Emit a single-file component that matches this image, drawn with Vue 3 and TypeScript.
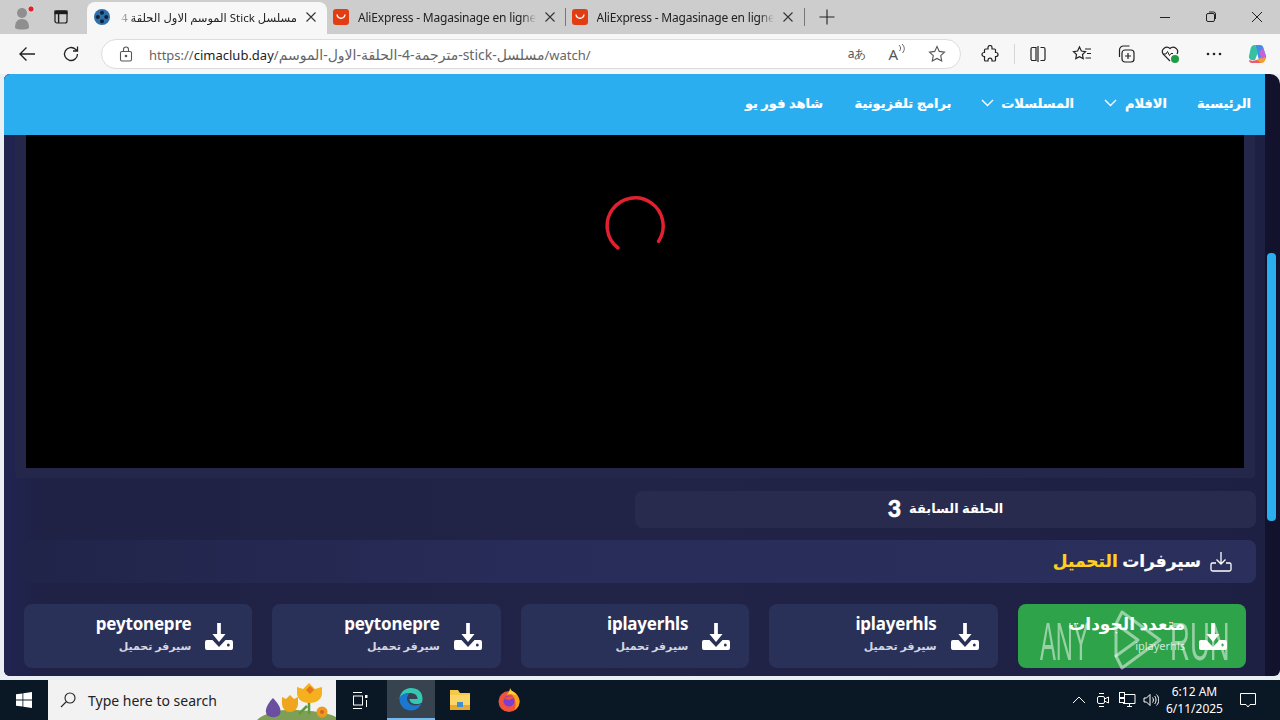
<script setup lang="ts">
const navItems = [
  { label: 'الرئيسية', caret: false, width: 54 },
  { label: 'الافلام', caret: true, width: 63 },
  { label: 'المسلسلات', caret: true, width: 93 },
  { label: 'برامج تلفزيونية', caret: false, width: 96 },
  { label: 'شاهد فور يو', caret: false, width: 82 },
]

const servers = [
  { name: 'متعدد الجودات', sub: 'iplayerhls', green: true },
  { name: 'iplayerhls', sub: 'سيرفر تحميل', green: false },
  { name: 'iplayerhls', sub: 'سيرفر تحميل', green: false },
  { name: 'peytonepre', sub: 'سيرفر تحميل', green: false },
  { name: 'peytonepre', sub: 'سيرفر تحميل', green: false },
]

const shopTabs = ['AliExpress - Magasinage en ligne', 'AliExpress - Magasinage en ligne']
</script>

<template>
  <div class="screen">
    <!-- tab strip -->
    <header class="tabstrip">
      <div class="profile">
        <svg width="24" height="26" viewBox="0 0 24 26">
          <circle cx="10" cy="9" r="5" fill="#8f8f8f" />
          <path d="M3 24c0-6 2.500-9 7-9s7 3 7 9c-3 2-11 2-14 0z" fill="#8f8f8f" />
          <circle cx="19" cy="5" r="3.200" fill="#d9232e" stroke="#e8e8e8" stroke-width="1" />
        </svg>
      </div>
      <div class="workspace">
        <svg width="14" height="14" viewBox="0 0 14 14" fill="none" stroke="#1c1c1c" stroke-width="1.200">
          <rect x="1" y="1" width="12" height="12" rx="2" />
          <path d="M4.600 3.600V13" stroke-width="1.400" />
          <rect x="1" y="1" width="12" height="2.600" fill="#1c1c1c" />
        </svg>
      </div>
      <div class="tab tab-active">
        <svg class="favicon" width="16" height="16" viewBox="0 0 16 16">
          <circle cx="8" cy="8" r="8" fill="#2f6fa8" />
          <circle cx="8" cy="3.800" r="2" fill="#10233c" />
          <circle cx="8" cy="12.200" r="2" fill="#10233c" />
          <circle cx="3.800" cy="8" r="2" fill="#10233c" />
          <circle cx="12.200" cy="8" r="2" fill="#10233c" />
        </svg>
        <span class="tab-title rtl-title">مسلسل Stick الموسم الاول الحلقة 4</span>
        <svg class="tab-x" width="10" height="10" viewBox="0 0 10 10" stroke="#333" stroke-width="1.100"><path d="M.5.5l9 9M9.500.5l-9 9" /></svg>
      </div>
      <div v-for="(title, i) in shopTabs" :key="i" class="tab" :class="{ 'tab-sep': i === 0 }">
        <svg class="favicon" width="16" height="16" viewBox="0 0 16 16">
          <rect width="16" height="16" rx="3" fill="#e13c12" />
          <path d="M4 5.500c.6 5 7.400 5 8 0" fill="none" stroke="#fff" stroke-width="1.400" />
        </svg>
        <span class="tab-title">{{ title }}</span>
        <svg class="tab-x" width="10" height="10" viewBox="0 0 10 10" stroke="#333" stroke-width="1.100"><path d="M.5.5l9 9M9.500.5l-9 9" /></svg>
      </div>
      <div class="new-tab">
        <svg width="16" height="16" viewBox="0 0 16 16" stroke="#222" stroke-width="1.100"><path d="M8 .5v15M.5 8h15" /></svg>
      </div>
      <div class="win-controls">
        <svg width="46" height="14" viewBox="0 0 46 14" stroke="#222"><path d="M18 7.500h10" /></svg>
        <svg width="46" height="14" viewBox="0 0 46 14" fill="none" stroke="#222"><rect x="18.500" y="3.500" width="8" height="8" rx="1.500" /><path d="M21 2h4.500a2 2 0 0 1 2 2v5" /></svg>
        <svg width="46" height="14" viewBox="0 0 46 14" stroke="#222"><path d="M18 2l10 10M28 2L18 12" /></svg>
      </div>
    </header>

    <!-- address bar -->
    <div class="toolbar">
      <button class="tool back">
        <svg width="18" height="16" viewBox="0 0 18 16" fill="none" stroke="#222" stroke-width="1.400"><path d="M17 8H2M8.500 1.500L2 8l6.500 6.500" /></svg>
      </button>
      <button class="tool reload">
        <svg width="18" height="18" viewBox="0 0 18 18" fill="none" stroke="#222" stroke-width="1.300"><path d="M15.500 9a6.500 6.500 0 1 1-2-4.700L15.500 6M15.500 1.500V6H11" /></svg>
      </button>
      <div class="omnibox">
        <svg class="lock" width="14" height="16" viewBox="0 0 14 16" fill="none" stroke="#555" stroke-width="1.100"><rect x="1.500" y="5.500" width="11" height="9.500" rx="1.500" /><path d="M4.500 5.500V3.500a2.500 2.500 0 0 1 5 0v2" /><circle cx="7" cy="10" r=".8" fill="#555" /></svg>
        <span class="url"><span class="url-dim">https://</span><span class="url-host">cimaclub.day</span><span class="url-dim">/<bdi dir="rtl" class="url-ar">مسلسل-stick-مترجمة-4-الحلقة-الاول-الموسم</bdi>/watch/</span></span>
        <div class="omni-icons">
          <span class="translate">aあ</span>
          <span class="read">A<svg width="7" height="10" viewBox="0 0 7 10" fill="none" stroke="#555" stroke-width=".9"><path d="M1 1c2 2 2 4 .5 6M4 0c3 3 3 6 .5 9" /></svg></span>
          <svg width="18" height="18" viewBox="0 0 18 18" fill="none" stroke="#555" stroke-width="1.100"><path d="M9 1.500l2.300 4.900 5.200.7-3.800 3.600 1 5.300L9 13.400 4.300 16l1-5.300L1.500 7.100l5.200-.7z" /></svg>
        </div>
      </div>
      <div class="tool-icons">
        <span class="cell"><svg width="18" height="18" viewBox="0 0 18 18" fill="none" stroke="#222" stroke-width="1.200"><path d="M7 2.500a2 2 0 0 1 4 0V4h2.500a1 1 0 0 1 1 1v2.500H15a2 2 0 0 1 0 4h-.5V15a1 1 0 0 1-1 1H11v-.8a2 2 0 0 0-4 0v.8H4.500a1 1 0 0 1-1-1v-3.500H3a2 2 0 0 1 0-4h.5V5a1 1 0 0 1 1-1H7z" /></svg></span>
        <i class="tool-sep"></i>
        <span class="cell"><svg width="18" height="18" viewBox="0 0 18 18" fill="none" stroke="#222" stroke-width="1.200"><path d="M7 2.500H3.500A1.500 1.500 0 0 0 2 4v10a1.500 1.500 0 0 0 1.500 1.500H7zM9 1v16M11.500 2.500h3A1.500 1.500 0 0 1 16 4v10a1.500 1.500 0 0 1-1.500 1.500h-3" /></svg></span>
        <span class="cell"><svg width="20" height="18" viewBox="0 0 20 18" fill="none" stroke="#222" stroke-width="1.200"><path d="M7.500 2l1.900 4 4.100.6-3 2.900.7 4.100-3.700-2-3.700 2 .7-4.100-3-2.900L5.600 6zM13 4h6M15 8.500h4M13.500 13H19" /></svg></span>
        <span class="cell"><svg width="20" height="20" viewBox="0 0 20 20" fill="none" stroke="#222" stroke-width="1.200"><rect x="6" y="6" width="12" height="12" rx="3" /><path d="M12 9v6M9 12h6M3.500 13V6a4 4 0 0 1 4-4h6" /></svg></span>
        <span class="cell"><svg width="20" height="20" viewBox="0 0 20 20" fill="none"><path d="M10 17L3 10a4.500 4.500 0 0 1 7-5.500A4.500 4.500 0 0 1 17 10" stroke="#222" stroke-width="1.200" /><path d="M3 10h3l1.500-2.500 2 4 1.500-2h2" stroke="#222" stroke-width="1" /><circle cx="15" cy="15" r="4" fill="#1f9d45" /></svg></span>
        <span class="cell"><svg width="18" height="18" viewBox="0 0 18 18" fill="#222"><circle cx="3" cy="9" r="1.300" /><circle cx="9" cy="9" r="1.300" /><circle cx="15" cy="9" r="1.300" /></svg></span>
        <span class="cell"><svg width="22" height="22" viewBox="0 0 22 22">
          <path d="M8 2h5c2 0 3 1 3.500 3L19 13c.6 2-1 4-3 4h-4L9 6C8.700 4 8.500 3 8 2z" fill="#3f8ee8" />
          <path d="M8 2C5 2 4 4 3.500 6L2 13c-.5 2 1 4 3 4h3l3-8z" fill="#35c1a0" />
          <path d="M5 20h9c3 0 4-2 5-5l-3-2-4 3-3 1z" fill="#f3a02e" />
          <path d="M16 5l3 8-4 3-3-7z" fill="#c764d8" />
          <path d="M5 20c-2 0-3-1-3-3 2 1 5 1 8 0l4 3z" fill="#ea5b70" />
        </svg></span>
      </div>
    </div>

    <!-- web page -->
    <div class="viewport">
      <main class="page">
        <nav class="site-nav">
          <a v-for="item in navItems" :key="item.label" class="nav-link" :class="{ caret: item.caret }" :style="{ width: item.width + 'px' }">
            <span>{{ item.label }}</span>
            <svg v-if="item.caret" width="13" height="8" viewBox="0 0 13 8" fill="none" stroke="#fff" stroke-width="1.400"><path d="M1 1l5.500 5.500L12 1" /></svg>
          </a>
        </nav>

        <div class="content">
          <section class="player-wrap">
            <div class="player">
              <svg class="spinner" width="60" height="60" viewBox="0 0 60 60" fill="none" stroke="#e3202f" stroke-width="3.500" stroke-linecap="round"><path d="M13 52A28 28 0 1 1 53.600 45.200" /></svg>
            </div>
          </section>

          <div class="episode-row">
            <a class="prev-episode"><span class="ep-label">الحلقة السابقة</span><b class="ep-num">3</b></a>
          </div>

          <div class="section-head">
            <svg width="24" height="24" viewBox="0 0 24 24" fill="none" stroke="#fff" stroke-width="1.300"><path d="M12 2v12M7.500 9.500L12 14l4.500-4.500M7 13H3.500A1.500 1.500 0 0 0 2 14.500v5A1.500 1.500 0 0 0 3.500 21h17a1.500 1.500 0 0 0 1.500-1.500v-5a1.500 1.500 0 0 0-1.500-1.500H17" /></svg>
            <h2>سيرفرات <em>التحميل</em></h2>
          </div>

          <div class="servers">
            <a v-for="(srv, i) in servers" :key="i" class="server" :class="{ green: srv.green }">
              <svg class="dl" width="28" height="28" viewBox="0 0 30 28" preserveAspectRatio="none" fill="#fff">
                <path d="M13 1h4v11h5l-7 8-7-8h5z" />
                <path d="M2 18h6l7 7 7-7h6a2 2 0 0 1 2 2v6a2 2 0 0 1-2 2H2a2 2 0 0 1-2-2v-6a2 2 0 0 1 2-2z" />
                <circle cx="25" cy="23" r="1.500" fill="#2a3158" />
              </svg>
              <div class="srv-text">
                <strong>{{ srv.name }}</strong>
                <small>{{ srv.sub }}</small>
              </div>
            </a>
          </div>
        </div>
      </main>
      <div class="scrollbar"><i class="thumb"></i></div>
    </div>

    <!-- taskbar -->
    <footer class="taskbar">
      <div class="start">
        <svg width="16" height="16" viewBox="0 0 16 16" fill="#fff"><path d="M0 2.300l6.500-.9v6.200H0zM7.300 1.300L16 0v7.600H7.300zM0 8.400h6.500v6.200L0 13.700zM7.300 8.400H16V16l-8.700-1.300z" /></svg>
      </div>
      <div class="search">
        <svg width="16" height="16" viewBox="0 0 16 16" fill="none" stroke="#222" stroke-width="1.100"><circle cx="10" cy="6" r="5" /><path d="M6.500 9.500L1 15" /></svg>
        <span>Type here to search</span>
        <svg class="flowers" width="80" height="40" viewBox="0 0 80 40">
          <path d="M1 40c8-8 26-11 40-10s30 2 39 7v3z" fill="#7f9f56" />
          <path d="M17 18c-6 6-9 13-6 17 3 3 11 3 13-1 2-5-2-11-7-16z" fill="#6a4fa0" />
          <path d="M34 32V22M53 34V18M43 34l8-8" stroke="#5d9c3a" stroke-width="2.500" fill="none" />
          <path d="M26 17l4 2 4-4 4 4 4-2v7a8 8 0 0 1-16 0z" fill="#f0a51e" />
          <path d="M41 7l6 2 6-6 6 6 7-2v6c0 6-5 10-12.500 10S41 19 41 13z" fill="#f5b01d" />
          <path d="M50 10l4-4 4 4-4 4z" fill="#e8731a" />
          <circle cx="66" cy="32" r="5.500" fill="#ee9a22" />
          <circle cx="66" cy="32" r="2" fill="#d4661a" />
        </svg>
      </div>
      <div class="task-view">
        <svg width="16" height="17" viewBox="0 0 16 17" fill="none" stroke="#fff"><path d="M1 .5h9M1 16.500h9" /><rect x="1.500" y="4" width="9" height="9" /><rect x="13" y="3" width="2.500" height="3" fill="#fff" stroke="none" /><path d="M14.500 8v7" /></svg>
      </div>
      <div class="task-app active">
        <svg width="24" height="24" viewBox="0 0 24 24">
          <path d="M12 1C5 1 1 6 .5 12c2-4 6-6 10-6 5 0 8 2 8 6h-8c0 3 3 5 7 5 2 0 4-.5 5-1 .800-1.500 1-3 1-4.500C23.500 5 18.500 1 12 1z" fill="#36c7b3" />
          <path d="M.5 12C.5 19 6 23.500 12 23.500c4 0 8-2 10-6.500-7 3-13 1-14-5 0-2.500 1-4.500 2.500-6C5 6 .5 8.500.5 12z" fill="#1a78d0" />
        </svg>
      </div>
      <div class="task-app">
        <svg width="24" height="22" viewBox="0 0 24 22"><path d="M2 1h8l2 3h10v4H2z" fill="#f5c84a" /><rect x="2" y="6" width="20" height="15" fill="#fbd566" /><rect x="2" y="16" width="20" height="5" fill="#e8a92f" /><rect x="9" y="13" width="6" height="5" fill="#3f8fd6" /></svg>
      </div>
      <div class="task-app">
        <svg width="24" height="24" viewBox="0 0 24 24">
          <circle cx="12" cy="13.500" r="10.500" fill="#f0533a" />
          <path d="M12 3c4-1 9 3 10.500 9 .5 5-2 8-5 10 3-6 0-14-5.500-19z" fill="#f7a11d" />
          <path d="M13 0c1 3 4 4 6 7-3-1-7-1-9 0 1-2 3-4 3-7z" fill="#fcd133" />
          <circle cx="12" cy="13" r="5.500" fill="#7d3dd1" />
          <path d="M7 11c2-3 8-4 11-1-3 0-4 1-5 2z" fill="#f0533a" />
        </svg>
      </div>
      <div class="tray">
        <span class="tray-cell"><svg width="14" height="8" viewBox="0 0 14 8" fill="none" stroke="#fff"><path d="M1 7l6-6 6 6" /></svg></span>
        <span class="tray-cell"><svg width="14" height="18" viewBox="0 0 14 18" fill="none" stroke="#fff"><rect x="1.500" y="5.500" width="7" height="7" rx="1.500" /><path d="M8.500 8l4-2v6l-4-2M3 2.500h5M3 15.500h5" /></svg></span>
        <span class="tray-cell"><svg width="17" height="16" viewBox="0 0 17 16" fill="none" stroke="#fff"><path d="M4 2.500h12v9H4M8 14.500h5M10.500 11.500v3" /><rect x=".5" y=".5" width="5" height="5" fill="#0a1725" /><rect x=".5" y="6.500" width="5" height="4" /></svg></span>
        <span class="tray-cell"><svg width="16" height="14" viewBox="0 0 16 14" fill="none" stroke="#fff"><path d="M1 5h2.500L7 1.500v11L3.500 9H1zM9.500 4.500c1.200 1.500 1.200 3.500 0 5M11.500 3c2 2 2 6 0 8M13.500 1.500c3 3 3 8 0 11" /></svg></span>
      </div>
      <div class="clock"><span>6:12 AM</span><span>6/11/2025</span></div>
      <div class="notify">
        <svg width="16" height="15" viewBox="0 0 16 15" fill="none" stroke="#fff"><path d="M.5.500h15v11h-5.500l-2 2.500-2-2.500H.5z" /></svg>
      </div>
    </footer>

    <!-- sandbox watermark over the page -->
    <div class="watermark" aria-hidden="true">
      <span class="wm-any">ANY</span>
      <svg class="wm-play" width="50" height="62" viewBox="0 0 50 62" fill="none" stroke="currentColor" stroke-width="3" stroke-linejoin="round" stroke-linecap="round">
        <path d="M9 3L47 31 9 59 3 47 25 31 3 15z" />
        <path d="M3 16v31" />
      </svg>
      <span class="wm-run">RUN</span>
    </div>
  </div>
</template>

<style>
html, body { margin: 0; background: #e9eff2; overflow: hidden; }
</style>

<style scoped>
.screen {
  position: relative;
  width: 1280px;
  height: 720px;
  display: flex;
  flex-direction: column;
  overflow: hidden;
  font-family: "Noto Sans", "DejaVu Sans", sans-serif;
  background: #e9eff2;
}

.tabstrip {
  height: 34px;
  display: flex;
  align-items: flex-end;
  background: #cdcdcd;
  flex: none;
}
.profile { width: 44px; height: 34px; box-sizing: border-box; padding-left: 4px; display: flex; align-items: center; justify-content: center; }
.workspace { width: 33px; height: 34px; display: flex; align-items: center; justify-content: center; margin-right: 10px; }
.tab {
  width: 238.500px;
  height: 32px;
  display: flex;
  align-items: center;
  gap: 9px;
  padding: 0 11px 2px 6px;
  box-sizing: border-box;
  font-size: 12px;
  letter-spacing: -0.15px;
  color: #222;
  position: relative;
}
.tab-sep::after {
  content: "";
  position: absolute;
  right: 0;
  top: 6px;
  height: 18px;
  width: 1px;
  background: #777;
}
.tab-x { flex: none; }
.tab-active {
  width: 240px;
  background: #f7f7f7;
  border-radius: 8px 8px 0 0;
  padding-left: 7px;
  font-size: 11.500px;
  letter-spacing: 0;
}
.favicon { flex: none; }
.tab-title {
  flex: 1;
  min-width: 0;
  white-space: nowrap;
  overflow: hidden;
  -webkit-mask-image: linear-gradient(to left, #000 92%, transparent);
  mask-image: linear-gradient(to left, #000 92%, transparent);
}
.tab:not(.tab-active) .tab-title {
  letter-spacing: -0.2px;
  -webkit-mask-image: linear-gradient(to right, #000 92%, transparent);
  mask-image: linear-gradient(to right, #000 92%, transparent);
}
.rtl-title { direction: rtl; text-align: right; }
.new-tab { width: 44px; height: 18px; margin-bottom: 8px; display: flex; align-items: center; justify-content: center; border-left: 1px solid #777; box-sizing: border-box; }
.win-controls { margin-left: auto; height: 34px; display: flex; align-items: center; }

.toolbar {
  height: 40px;
  flex: none;
  display: flex;
  align-items: center;
  background: #f7f7f7;
}
.tool {
  width: 45px;
  height: 34px;
  border: 0;
  background: none;
  padding: 0;
  display: flex;
  align-items: center;
  justify-content: center;
}
.back { margin-left: 5px; }
.reload { margin-right: 7px; margin-left: -1px; }
.omnibox {
  width: 861px;
  height: 30px;
  box-sizing: border-box;
  display: flex;
  align-items: center;
  background: #fff;
  border: 1px solid #dcdcdc;
  border-radius: 15px;
  padding: 0 14px 0 17px;
}
.lock { flex: none; margin-right: 16px; }
.url { font-size: 13px; white-space: nowrap; }
.url-dim { color: #666; }
.url-host { color: #222; }
.url-ar { font-size: 14px; }
.omni-icons { margin-left: auto; display: flex; align-items: center; gap: 23px; color: #555; }
.translate { font-size: 12px; }
.read { font-size: 15px; display: flex; align-items: flex-start; margin-left: -1px; }
.tool-icons { flex: 1; display: flex; align-items: center; padding-left: 7px; }
.cell { width: 44px; height: 34px; flex: none; display: flex; align-items: center; justify-content: center; }
.tool-sep { width: 1px; height: 20px; margin: 0 1px 0 2px; background: #d5d5d5; }

.viewport {
  height: 602px;
  flex: none;
  display: flex;
  margin-left: 4px;
  background: #12122c;
  border-radius: 6px 10px 6px 6px;
  overflow: hidden;
}
.page {
  width: 1261px;
  display: flex;
  flex-direction: column;
  color: #fff;
  direction: rtl;
  background: linear-gradient(90deg, #202450, #1f2145 3%, #212347 50%, #1d2043);
}
.site-nav {
  height: 61px;
  flex: none;
  display: flex;
  align-items: center;
  gap: 30px;
  padding: 0 14px 4px 0;
  box-sizing: border-box;
  background: #2aaeef;
}
.nav-link {
  display: flex;
  align-items: center;
  justify-content: center;
  font-size: 13px;
  font-weight: 700;
  white-space: nowrap;
  -webkit-text-stroke: 0.2px #fff;
}
.nav-link.caret { justify-content: space-between; }
.content { flex: 1; display: flex; flex-direction: column; min-height: 0; }
.player-wrap {
  margin: 0 10px 0 11px;
  padding: 0 11px 10px;
  background: #25274a;
  border-radius: 0 0 4px 4px;
}
.player {
  height: 333px;
  background: #000;
  display: flex;
  justify-content: center;
  align-items: flex-start;
  padding-top: 61px;
  box-sizing: border-box;
}
.episode-row { display: flex; padding: 13px 9px 0; }
.prev-episode {
  width: 621px;
  height: 37px;
  display: flex;
  align-items: center;
  justify-content: center;
  gap: 8px;
  padding-bottom: 3px;
  box-sizing: border-box;
  background: #292b4e;
  border-radius: 8px;
  font-size: 13px;
  font-weight: 700;
}
.ep-num { font-size: 23px; line-height: 28px; font-family: "Lato", sans-serif; font-weight: 900; -webkit-text-stroke: 0.6px #fff; }
.section-head {
  height: 43px;
  margin: 12px 9px 0 0;
  width: 1232px;
  padding-right: 23px;
  box-sizing: border-box;
  display: flex;
  align-items: center;
  gap: 8px;
  background: linear-gradient(to left, #2a2f5c, #282c58 60%, #212449);
  border-radius: 8px;
}
.section-head h2 { margin: 0 0 3px; font-size: 17px; font-weight: 700; -webkit-text-stroke: 0.2px currentColor; }
.section-head em { font-style: normal; color: #ffd21f; }
.servers {
  display: flex;
  gap: 20px;
  padding: 21px 19px 0 0;
}
.server {
  width: 228.400px;
  height: 64px;
  flex: none;
  box-sizing: border-box;
  display: flex;
  align-items: center;
  gap: 14px;
  padding-right: 19px;
  background: #2a3158;
  border-radius: 8px;
}
.server.green { background: #2ea34a; }
.server.green .dl circle { fill: #2ea34a; }
.dl { flex: none; }
.srv-text { display: flex; flex-direction: column; margin-bottom: 5px; }
.srv-text strong { font-size: 17px; line-height: 24px; font-weight: 700; letter-spacing: -0.2px; }
.srv-text small { font-size: 11px; line-height: 19px; font-weight: 700; color: #d4d6e2; }
.green small { font-weight: 400; color: #cfe8d4; }

.scrollbar { flex: 1; position: relative; }
.thumb {
  position: absolute;
  right: 4px;
  top: 179px;
  width: 9px;
  height: 268px;
  background: #2aaeef;
  border-radius: 4px;
}

.taskbar {
  margin-top: auto;
  height: 40px;
  flex: none;
  display: flex;
  align-items: center;
  background: #0a1725;
  color: #fff;
}
.start { width: 48px; display: flex; justify-content: center; }
.search {
  width: 288px;
  height: 40px;
  box-sizing: border-box;
  position: relative;
  display: flex;
  align-items: center;
  gap: 12px;
  padding-left: 12px;
  background: #f2f2f2;
  color: #222;
  font-size: 14px;
  overflow: hidden;
}
.flowers { position: absolute; right: 0; bottom: 0; }
.task-view { width: 48px; display: flex; justify-content: center; }
.task-app { width: 48px; height: 40px; box-sizing: border-box; display: flex; align-items: center; justify-content: center; margin-right: 1px; }
.task-app.active { background: #37444f; border-bottom: 2px solid #76b9ed; margin-left: 3px; }
.tray { margin-left: auto; display: flex; align-items: center; }
.tray-cell { width: 24px; display: flex; justify-content: center; }
.clock { width: 63px; display: flex; flex-direction: column; align-items: center; font-size: 12px; line-height: 17px; white-space: nowrap; }
.notify { width: 44px; display: flex; justify-content: center; margin-right: 10px; }

.watermark {
  position: absolute;
  left: 1040px;
  top: 609px;
  width: 190px;
  height: 62px;
  display: flex;
  align-items: center;
  color: rgba(255, 255, 255, 0.5);
  pointer-events: none;
}
.watermark span {
  font-family: "Liberation Sans", sans-serif;
  font-size: 54px;
  line-height: 62px;
  display: inline-block;
  transform-origin: left center;
  white-space: nowrap;
  flex: none;
  margin-top: 2px;
}
.wm-any { width: 48px; transform: scaleX(0.44); margin-right: 25px; }
.wm-play { flex: none; margin-right: 7px; }
.wm-run { width: 60px; transform: scaleX(0.51); }
</style>
